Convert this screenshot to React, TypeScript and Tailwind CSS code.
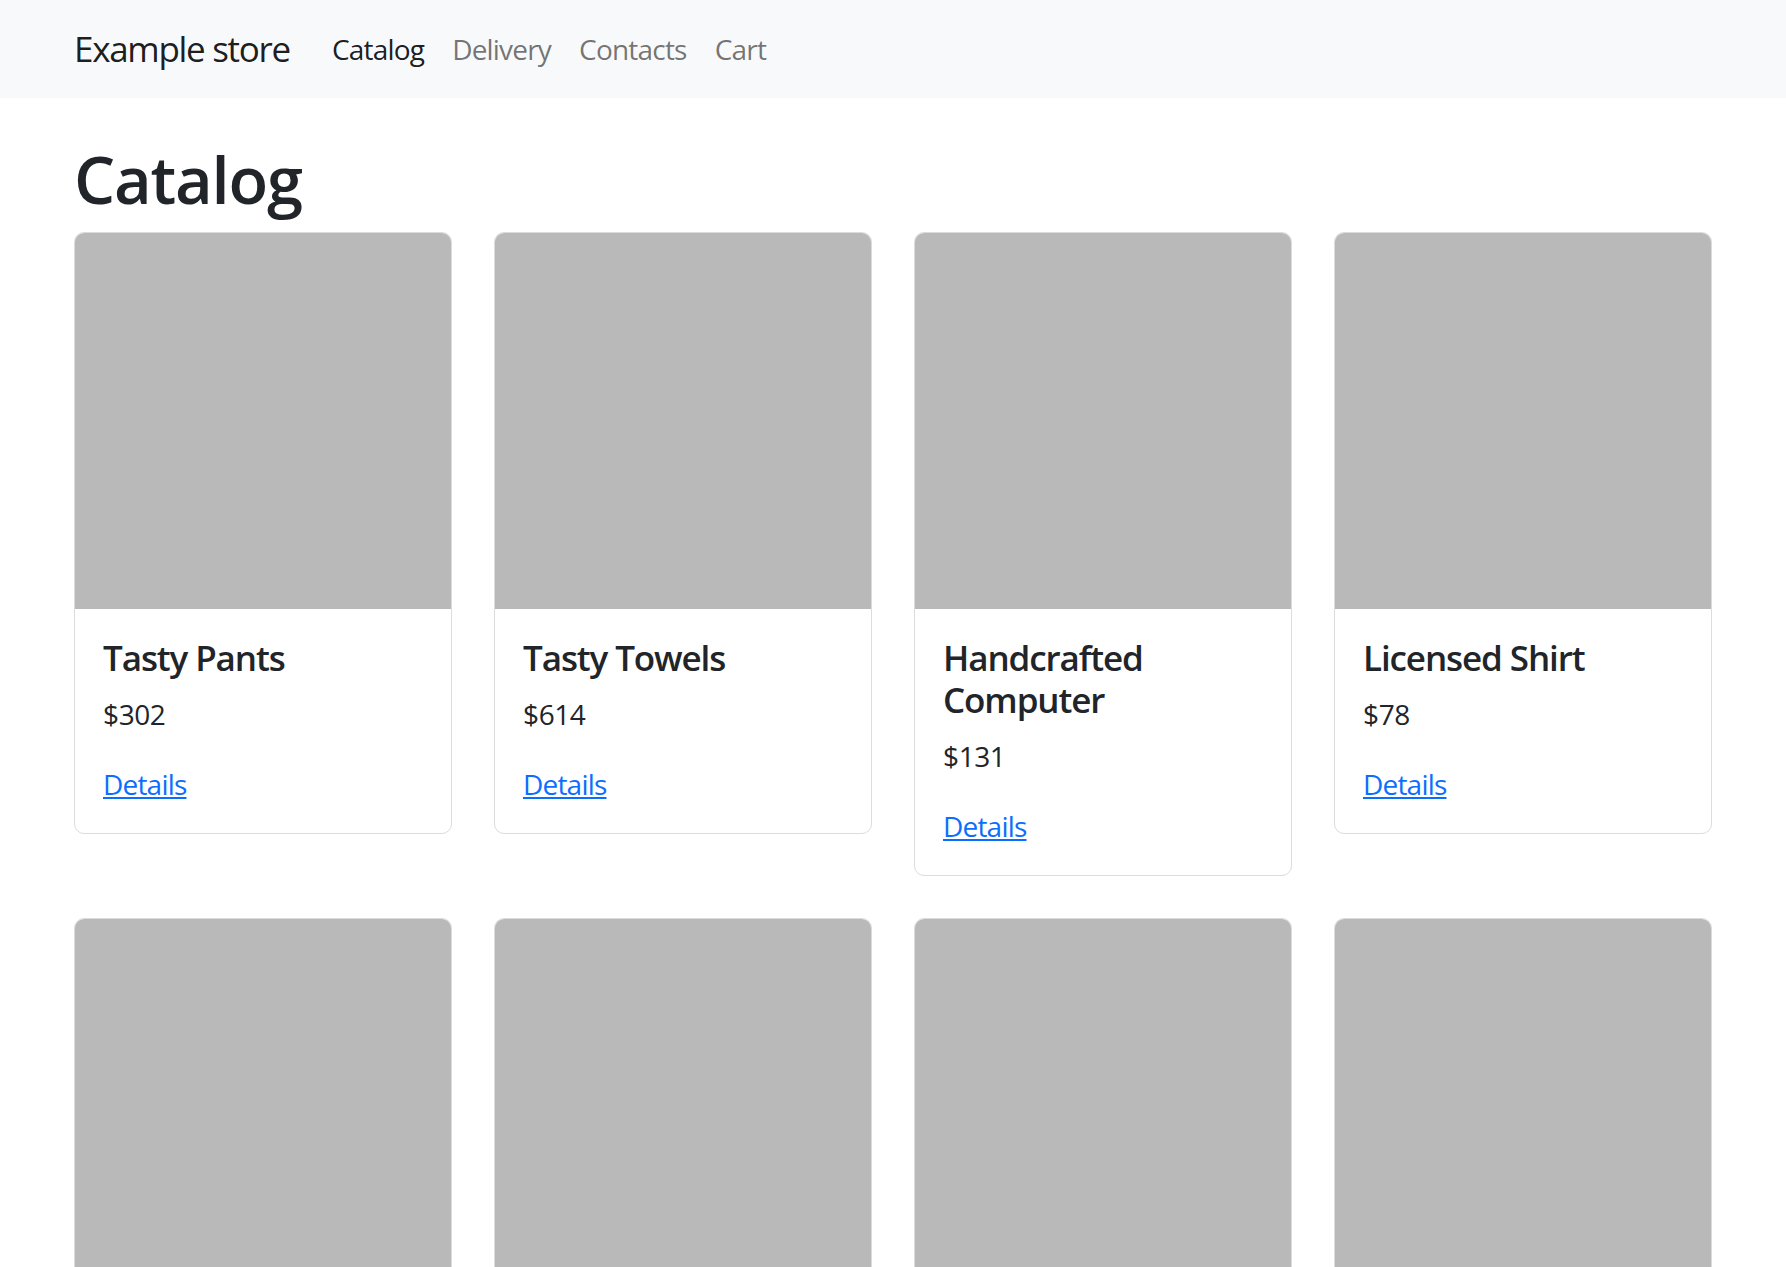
import React from "react";

const products = [
  { name: "Tasty Pants", price: 302 },
  { name: "Tasty Towels", price: 614 },
  { name: "Handcrafted Computer", price: 131 },
  { name: "Licensed Shirt", price: 78 },
  { name: "Rustic Chair", price: 245 },
  { name: "Sleek Keyboard", price: 512 },
  { name: "Generic Shoes", price: 97 },
  { name: "Small Gloves", price: 186 },
];

const font = { fontFamily: '"Open Sans", "Noto Sans", "Liberation Sans", sans-serif' };

export default function App() {
  return (
    <div className="min-h-screen bg-white text-[#212529]" style={font}>
      <nav className="bg-[#f8f9fa] py-[14px]">
        <div className="max-w-[1680px] mx-auto px-[21px] flex items-center">
          <a href="#" className="text-[35px] leading-[52.5px] py-[8.75px] mr-[28px] text-[rgba(0,0,0,0.9)] tracking-[-1.3px]">
            Example store
          </a>
          <div className="flex">
            <a href="#" className="text-[28px] leading-[42px] py-[14px] px-[14px] text-[rgba(0,0,0,0.9)] tracking-[-0.8px]">Catalog</a>
            <a href="#" className="text-[28px] leading-[42px] py-[14px] px-[14px] text-[rgba(0,0,0,0.55)] tracking-[-0.8px]">Delivery</a>
            <a href="#" className="text-[28px] leading-[42px] py-[14px] px-[14px] text-[rgba(0,0,0,0.55)] tracking-[-0.8px]">Contacts</a>
            <a href="#" className="text-[28px] leading-[42px] py-[14px] px-[14px] text-[rgba(0,0,0,0.55)] tracking-[-0.8px]">Cart</a>
          </div>
        </div>
      </nav>
      <main className="max-w-[1680px] mx-auto px-[21px] mt-[42px]">
        <h1 className="text-[65px] leading-[78px] font-semibold mb-[14px] tracking-[-1.2px]">Catalog</h1>
        <div className="grid grid-cols-4 gap-x-[42px] gap-y-[42px] items-start">
          {products.map((p) => (
            <div key={p.name} className="border-[1.5px] border-[#dcdcdc] rounded-[10px] bg-white overflow-hidden">
              <div className="w-full aspect-square bg-[#b9b9b9]" />
              <div className="p-[28px]">
                <h5 className="text-[35px] leading-[42px] font-semibold mb-[14px] tracking-[-1.1px]">{p.name}</h5>
                <p className="text-[28px] leading-[42px] mb-[28px] tracking-[-0.4px]">${p.price}</p>
                <a href="#" className="text-[28px] leading-[42px] text-[#0d6efd] underline tracking-[-0.8px]">Details</a>
              </div>
            </div>
          ))}
        </div>
      </main>
    </div>
  );
}
